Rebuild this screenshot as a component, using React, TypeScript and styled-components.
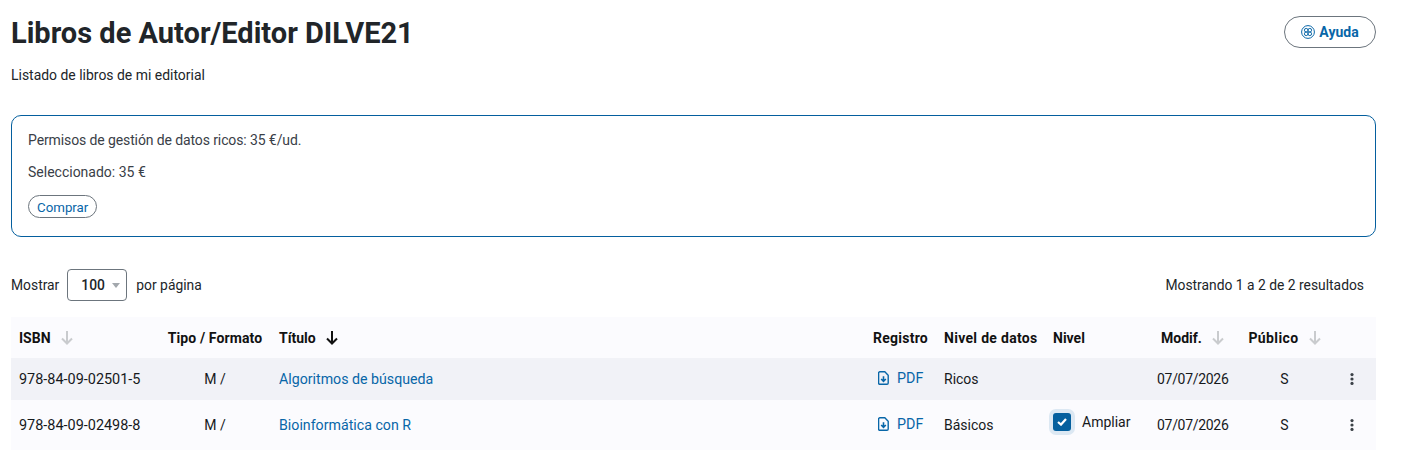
import React from 'react';
import styled, { createGlobalStyle } from 'styled-components';

const GlobalStyle = createGlobalStyle`
  html, body {
    margin: 0;
    background: #fff;
    font-family: Roboto, "Liberation Sans", sans-serif;
    color: #212529;
  }
`;

// **** Style Section **** //

const Page = styled.div`
  width: 1365px;
  padding: 0 0 0 11px;
`;

const Header = styled.header`
  display: flex;
  justify-content: space-between;
  align-items: flex-start;
  padding-top: 16px;
`;

const Title = styled.h1`
  margin: 0;
  font-size: 29px;
  line-height: 34px;
  font-weight: 700;
  color: #212529;
`;

const Subtitle = styled.p`
  margin: 16px 0 0;
  font-size: 13.95px;
  line-height: 18px;
`;

const HelpButton = styled.button`
  display: flex;
  align-items: center;
  justify-content: center;
  gap: 4px;
  width: 92px;
  height: 32px;
  border: 1px solid #6c757d;
  border-radius: 16px;
  background: #fff;
  color: #0866a8;
  font: 700 14px Roboto, sans-serif;
`;

const InfoBox = styled.section`
  margin-top: 31px;
  height: 122px;
  box-sizing: border-box;
  border: 1px solid #045f9e;
  border-radius: 10px;
  padding: 15px 16px 0;
  font-size: 14px;
  color: #3a4047;
`;

const InfoLine = styled.p<{ $tight?: boolean }>`
  margin: 0 0 14px;
  line-height: 18px;
  letter-spacing: ${p => (p.$tight ? '-0.11px' : '0')};
`;

const BuyButton = styled.button`
  display: block;
  height: 23px;
  margin-top: 1px;
  padding: 1px 8px 0;
  border: 1px solid #6c757d;
  border-radius: 12px;
  background: #fff;
  color: #0866a8;
  font: 400 13.3px Roboto, sans-serif;
`;

const Toolbar = styled.div`
  display: flex;
  justify-content: space-between;
  align-items: center;
  margin-top: 32px;
  padding-right: 12px;
  font-size: 13.85px;
`;

const PageSize = styled.div`
  display: flex;
  align-items: center;
  gap: 8px;
`;

const SelectBox = styled.div`
  display: flex;
  align-items: center;
  justify-content: space-between;
  box-sizing: border-box;
  width: 60px;
  height: 32px;
  margin-right: 1px;
  padding: 0 6px 0 13px;
  border: 1px solid #6c757d;
  border-radius: 4px;
  font-weight: 500;
`;

const Caret = styled.span`
  width: 0;
  height: 0;
  border-left: 4px solid transparent;
  border-right: 4px solid transparent;
  border-top: 5px solid #a3a8ad;
`;

const Table = styled.table`
  width: 100%;
  margin-top: 16px;
  border-collapse: collapse;
  table-layout: fixed;
  font-size: 14px;
  color: #16191c;
`;

const HeadRow = styled.tr`
  height: 41px;
  background: #fbfbfe;
`;

const Row = styled.tr<{ $shaded?: boolean }>`
  height: ${p => (p.$shaded ? '42px' : '50px')};
  background: ${p => (p.$shaded ? '#f1f2f7' : '#fbfbfe')};
`;

const Th = styled.th<{ $center?: boolean; $tracking?: number }>`
  padding: 0 8px;
  font-size: 14px;
  font-weight: 700;
  color: #111;
  white-space: nowrap;
  letter-spacing: ${p => p.$tracking || 0}px;
  text-align: ${p => (p.$center ? 'center' : 'left')};
`;

const Td = styled.td<{ $center?: boolean }>`
  padding: 0 8px;
  white-space: nowrap;
  text-align: ${p => (p.$center ? 'center' : 'left')};
`;

const IsbnCell = styled(Td)`
  font-size: 14.45px;
`;

const DateCell = styled(Td)`
  letter-spacing: -0.3px;
  text-align: center;
`;

const MenuCell = styled(Td)`
  padding-left: 17px;
`;

const HeadLabel = styled.span`
  display: inline-flex;
  align-items: center;
  gap: 10px;
`;

const TitleLink = styled.a`
  color: #0866a8;
  font-size: 14.2px;
  font-weight: 400;
`;

const PdfLink = styled.a`
  display: inline-flex;
  align-items: center;
  gap: 8px;
  padding-left: 5px;
  color: #0866a8;
  font-size: 14.3px;
`;

const LevelCell = styled.label`
  display: inline-flex;
  align-items: center;
  gap: 11px;
  margin-top: -8px;
  vertical-align: middle;
`;

const CheckBox = styled.span`
  display: flex;
  align-items: center;
  justify-content: center;
  width: 18px;
  height: 18px;
  border-radius: 3px;
  background: #045f9e;
  box-shadow: 0 0 0 4px #dce8f3;
`;

const MenuDots = styled.button`
  display: block;
  padding: 0;
  border: 0;
  background: none;
  color: #3c4248;
  line-height: 0;
`;

// **** Small Icons **** //

const SortArrow = ({ active }: { active?: boolean }) => (
  <svg width="12" height="14" viewBox="0 0 12 14" fill="none" stroke={active ? '#111' : '#c9cbce'} strokeWidth="2">
    <path d="M6 0v13M1 7.5 6 12.5l5-5" />
  </svg>
);

const HelpIcon = () => (
  <svg width="14" height="14" viewBox="0 0 14 14" fill="none" stroke="currentColor" strokeWidth="1">
    <circle cx="7" cy="7" r="6.4" />
    <circle cx="5.2" cy="5.2" r="1.8" />
    <circle cx="8.8" cy="5.2" r="1.8" />
    <circle cx="5.2" cy="8.8" r="1.8" />
    <circle cx="8.8" cy="8.8" r="1.8" />
  </svg>
);

const PdfIcon = () => (
  <svg width="11" height="14" viewBox="0 0 11 14" fill="none">
    <path d="M1.8.8h5l3.4 3.4v7.9a1.2 1.2 0 0 1-1.2 1.2H1.8a1.2 1.2 0 0 1-1.2-1.2V2a1.2 1.2 0 0 1 1.2-1.2Z" stroke="#0866a8" strokeWidth="1.4" />
    <path d="M5.5 5.2v5M3.2 8 5.5 10.4 7.8 8" stroke="#0866a8" strokeWidth="1.6" />
  </svg>
);

const DotsIcon = () => (
  <svg width="4" height="12" viewBox="0 0 4 12" fill="currentColor">
    <circle cx="2" cy="1.6" r="1.6" />
    <circle cx="2" cy="6" r="1.6" />
    <circle cx="2" cy="10.4" r="1.6" />
  </svg>
);

// **** Data **** //

const columns = [
  { label: 'ISBN', width: 148, sort: 'idle' },
  { label: 'Tipo / Formato', width: 112, center: true, tracking: 0.12 },
  { label: 'Título', width: 594, sort: 'active' },
  { label: 'Registro', width: 71, tracking: 0.25 },
  { label: 'Nivel de datos', width: 109, tracking: 0.3 },
  { label: 'Nivel', width: 104 },
  { label: 'Modif.', width: 87, sort: 'idle', center: true },
  { label: 'Público', width: 97, sort: 'idle', center: true, tracking: 0.4 },
  { label: '', width: 43 }
];

const books = [
  { isbn: '978-84-09-02501-5', title: 'Algoritmos de búsqueda', level: 'Ricos', extend: false },
  { isbn: '978-84-09-02498-8', title: 'Bioinformática con R', level: 'Básicos', extend: true }
];

// **** Component Function **** //

const App = () => (
  <Page>
    <GlobalStyle />
    <Header>
      <div>
        <Title>Libros de Autor/Editor DILVE21</Title>
        <Subtitle>Listado de libros de mi editorial</Subtitle>
      </div>
      <HelpButton type="button">
        <HelpIcon />
        Ayuda
      </HelpButton>
    </Header>

    <InfoBox>
      <InfoLine $tight>Permisos de gestión de datos ricos: 35 €/ud.</InfoLine>
      <InfoLine>Seleccionado: 35 €</InfoLine>
      <BuyButton type="button">Comprar</BuyButton>
    </InfoBox>

    <Toolbar>
      <PageSize>
        Mostrar
        <SelectBox>
          100
          <Caret />
        </SelectBox>
        por página
      </PageSize>
      <span>Mostrando 1 a 2 de 2 resultados</span>
    </Toolbar>

    <Table>
      <colgroup>
        {columns.map(c => (
          <col key={c.label} width={c.width} />
        ))}
      </colgroup>
      <thead>
        <HeadRow>
          {columns.map(c => (
            <Th key={c.label} $center={c.center} $tracking={c.tracking}>
              <HeadLabel>
                {c.label}
                {c.sort && <SortArrow active={c.sort === 'active'} />}
              </HeadLabel>
            </Th>
          ))}
        </HeadRow>
      </thead>
      <tbody>
        {books.map((book, i) => (
          <Row key={book.isbn} $shaded={i === 0}>
            <IsbnCell>{book.isbn}</IsbnCell>
            <Td $center>M /</Td>
            <Td>
              <TitleLink>{book.title}</TitleLink>
            </Td>
            <Td>
              <PdfLink>
                <PdfIcon />
                PDF
              </PdfLink>
            </Td>
            <Td>{book.level}</Td>
            <Td>
              {book.extend && (
                <LevelCell>
                  <CheckBox>
                    <svg width="10" height="8" viewBox="0 0 10 8" fill="none" stroke="#fff" strokeWidth="2.2">
                      <path d="m1 4 3 2.6L9 1" />
                    </svg>
                  </CheckBox>
                  Ampliar
                </LevelCell>
              )}
            </Td>
            <DateCell>07/07/2026</DateCell>
            <Td $center>S</Td>
            <MenuCell>
              <MenuDots type="button">
                <DotsIcon />
              </MenuDots>
            </MenuCell>
          </Row>
        ))}
      </tbody>
    </Table>
  </Page>
);

export default App;
